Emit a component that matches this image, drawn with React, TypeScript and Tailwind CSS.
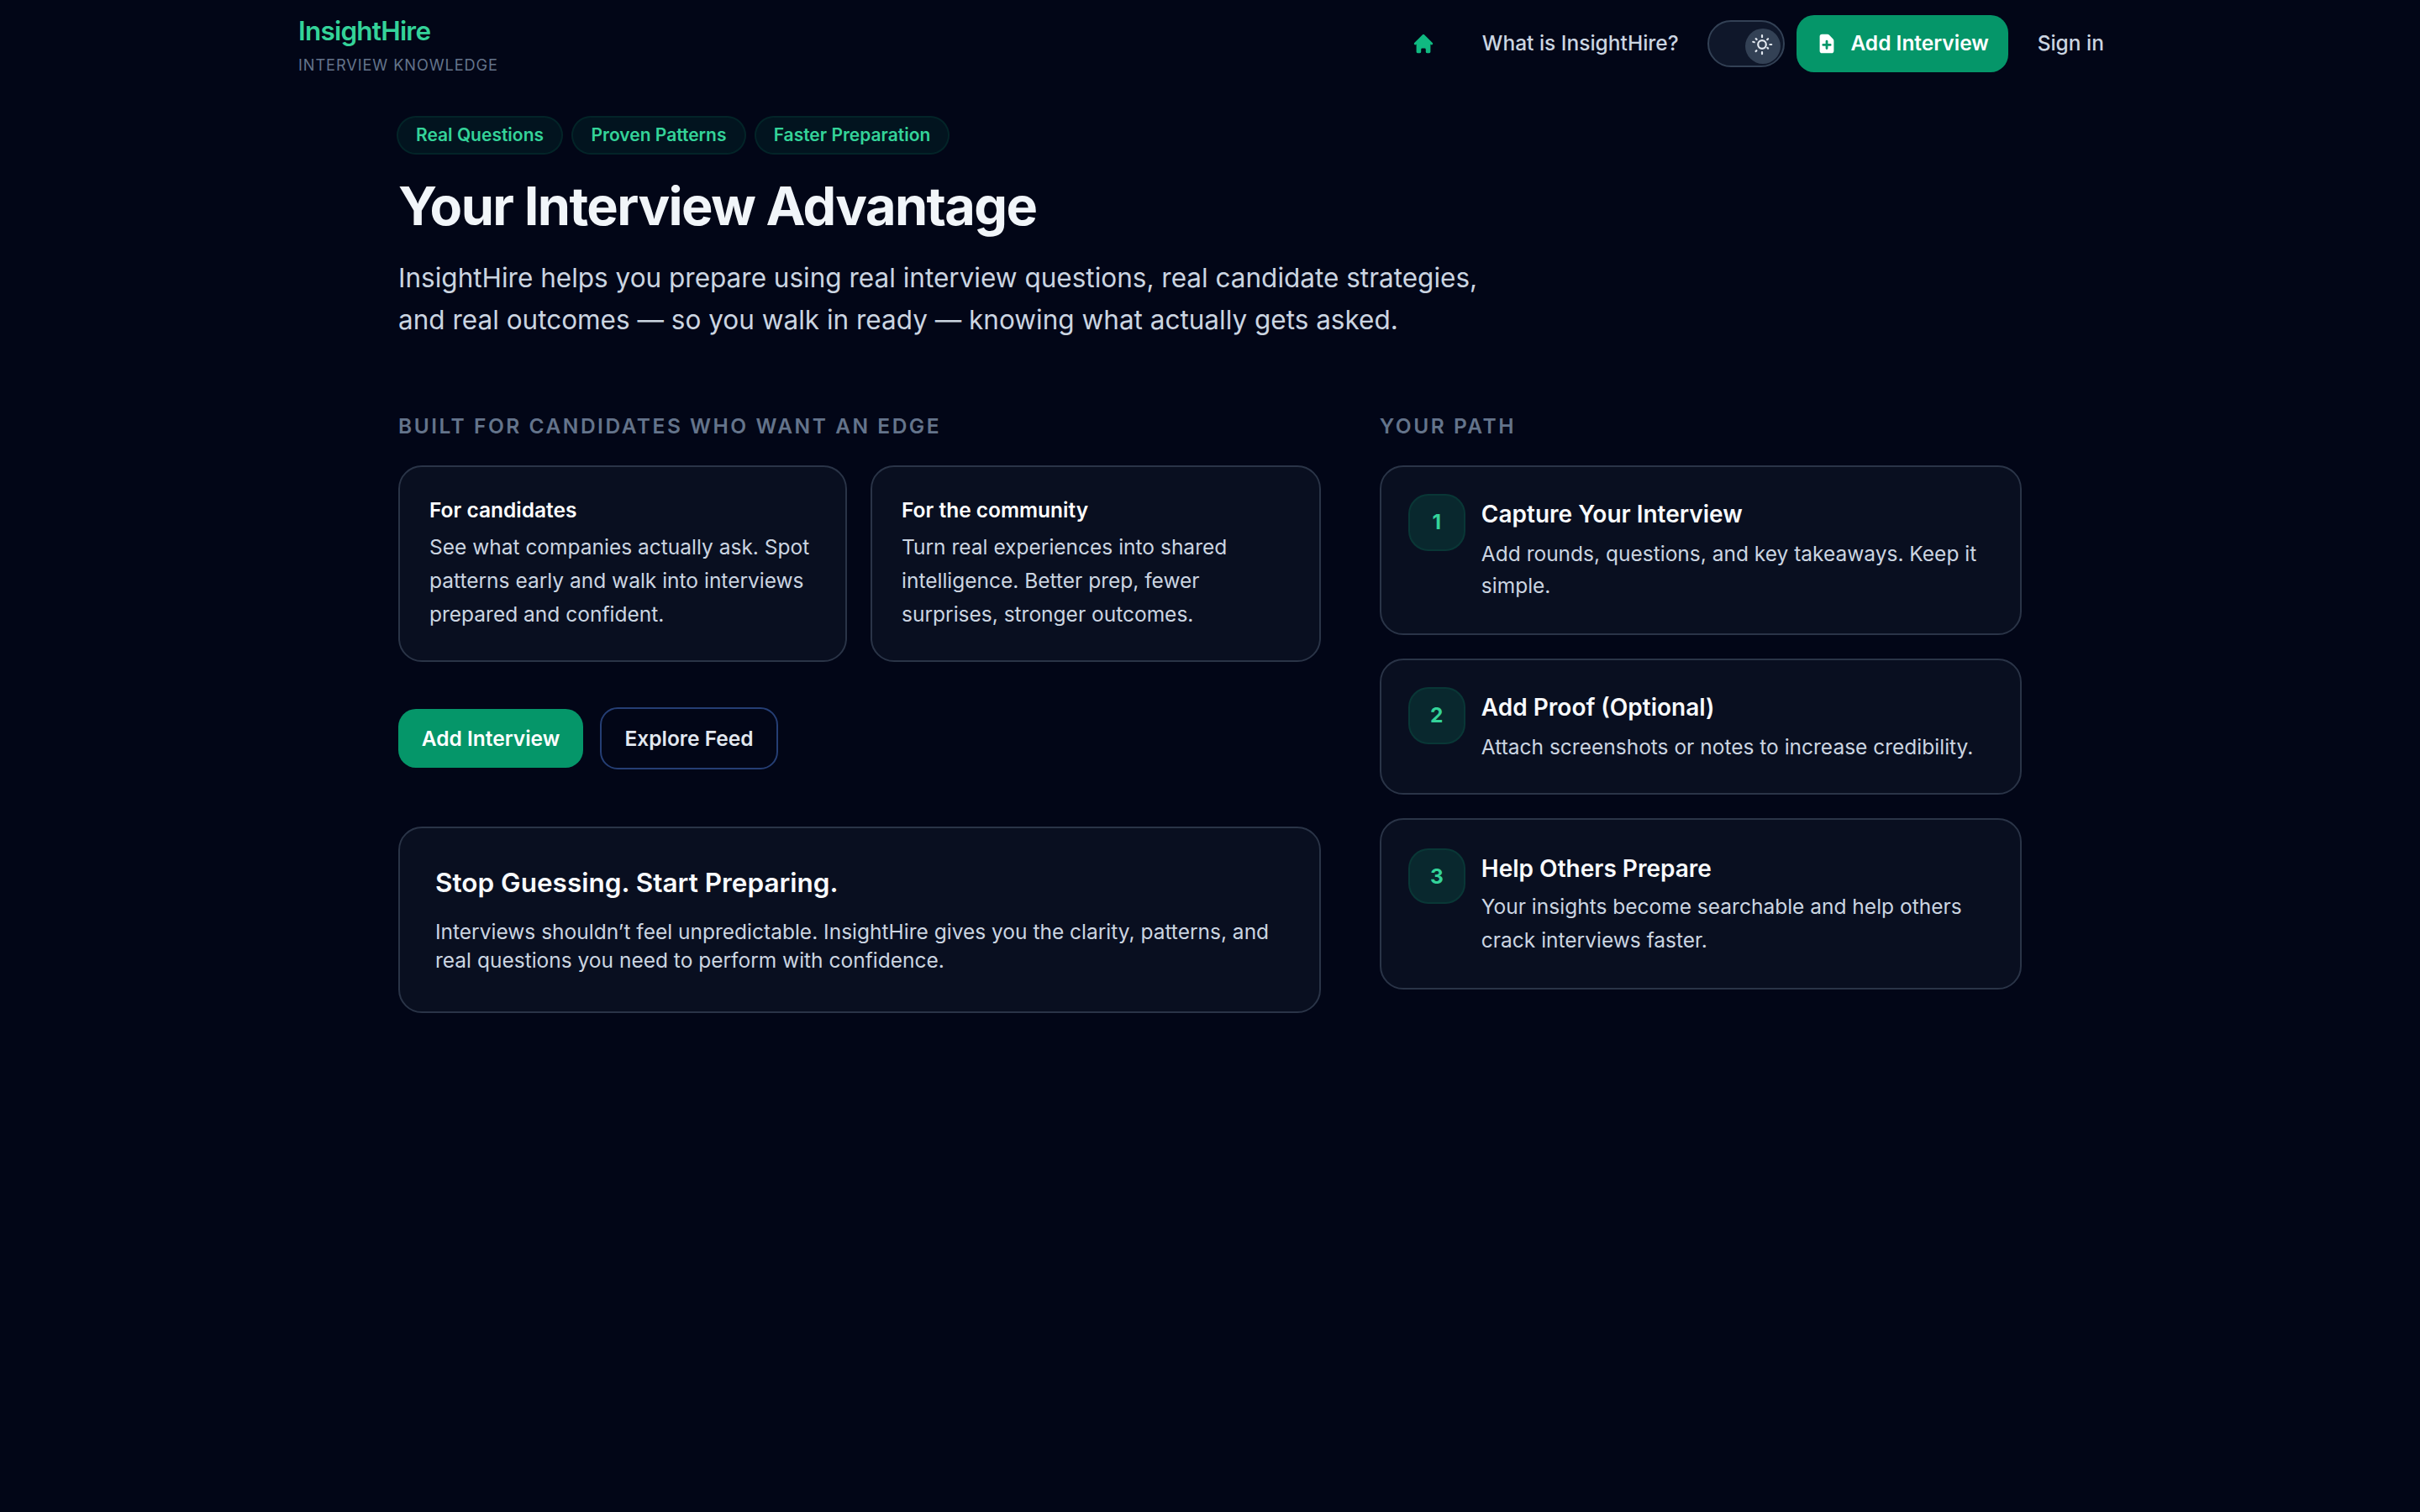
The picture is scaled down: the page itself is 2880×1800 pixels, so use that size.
import { HiDocumentAdd, HiHome } from "react-icons/hi";

const tags = [
  { label: "Real Questions", width: "w-[198px]" },
  { label: "Proven Patterns", width: "w-[208px]" },
  { label: "Faster Preparation", width: "w-[232px]" },
];

const audiences = [
  {
    title: "For candidates",
    text: "See what companies actually ask. Spot patterns early and walk into interviews prepared and confident.",
  },
  {
    title: "For the community",
    text: "Turn real experiences into shared intelligence. Better prep, fewer surprises, stronger outcomes.",
  },
];

const steps = [
  {
    title: "Capture Your Interview",
    text: "Add rounds, questions, and key takeaways. Keep it simple.",
    card: "h-[202px] pt-[32px]",
    badge: "h-[68px] pb-[2px]",
    body: "mt-[10px] leading-[38px]",
  },
  {
    title: "Add Proof (Optional)",
    text: "Attach screenshots or notes to increase credibility.",
    card: "h-[162px] pt-[32px]",
    badge: "h-[68px] pb-[2px]",
    body: "mt-[10px] leading-[38px]",
  },
  {
    title: "Help Others Prepare",
    text: "Your insights become searchable and help others crack interviews faster.",
    card: "h-[204px] pt-[34px]",
    badge: "h-[66px]",
    body: "mt-[7px] leading-[40px]",
  },
];

function SunIcon() {
  return (
    <svg
      viewBox="-14 -14 28 28"
      className="absolute left-[6px] top-[5px] size-[28px] text-slate-200"
      fill="none"
      stroke="currentColor"
      strokeWidth="2.2"
      strokeLinecap="round"
    >
      <circle r="4.8" />
      <path d="M0 -11v2.2M6.2 -5.9l.9 -.9M9.4 0h1.8M6.3 3.8l.8 .8M0 9.2v2M-6.6 7.2l-.8 .9M-9.2 -2.8l-1.6 -.4M-6.4 -6l-.9 -.9" />
    </svg>
  );
}

function ThemeToggle() {
  return (
    <button className="relative h-[56px] w-[92px] rounded-full border-2 border-[#334155] bg-[#0f172a]">
      <span className="absolute left-[43px] top-[8px] size-[42px] rounded-full bg-[#334155]">
        <SunIcon />
      </span>
    </button>
  );
}

function Header() {
  return (
    <header className="mx-auto flex h-[104px] w-[2240px] items-center justify-between pl-[35px] pr-[56px]">
      <div className="pt-[2px]">
        <div className="text-[31.5px] font-semibold leading-[43px] tracking-[-0.025em] text-[#34d399]">InsightHire</div>
        <div className="mt-[5px] text-[18.2px] leading-[28px] tracking-[0.05em] text-[#64748b]">INTERVIEW KNOWLEDGE</div>
      </div>
      <nav className="flex items-center text-[24.5px] font-medium text-[#cbd5e1]">
        <HiHome className="size-[28px] text-[#10b981]" />
        <a className="ml-[56px] pb-[2px]">What is InsightHire?</a>
        <div className="ml-[34px] flex items-center gap-[14px]">
          <ThemeToggle />
          <button className="flex h-[68px] w-[252px] items-center justify-center gap-[14px] rounded-[21px] bg-[#059669] font-semibold text-white">
            <HiDocumentAdd className="size-[28px]" />
            <span className="pb-[2px]">Add Interview</span>
          </button>
        </div>
        <a className="ml-[35px] pb-[2px]">Sign in</a>
      </nav>
    </header>
  );
}

function SectionLabel({ children }: { children: string }) {
  return (
    <h2 className="text-[24.5px] font-semibold leading-[34px] tracking-[2.52px] text-[#64748b]">{children}</h2>
  );
}

export default function App() {
  return (
    <div className="min-h-[1800px] bg-[#020617] font-['Inter',sans-serif] text-[24.5px] text-[#cbd5e1]">
      <Header />
      <main className="mx-auto w-[1932px] pt-[34px]">
        <div className="-ml-[2px] flex gap-[10px]">
          {tags.map((t) => (
            <span
              key={t.label}
              className={`flex h-[46px] items-center justify-center rounded-full border-2 border-[#10b981]/10 bg-[#10b981]/8 pb-[1px] text-[21px] font-semibold text-[#34d399] ${t.width}`}
            >
              {t.label}
            </span>
          ))}
        </div>
        <h1 className="mt-[25px] text-[63px] font-bold leading-[72px] tracking-[-0.025em] text-[#f1f5f9]">
          Your Interview Advantage
        </h1>
        <p className="mt-[25px] w-[1344px] text-[31.5px] leading-[50px]">
          InsightHire helps you prepare using real interview questions, real candidate strategies, and real outcomes —
          so you walk in ready — knowing what actually gets asked.
        </p>

        <div className="mt-[84px] grid grid-cols-12 gap-x-[70px]">
          <section className="col-span-7">
            <SectionLabel>BUILT FOR CANDIDATES WHO WANT AN EDGE</SectionLabel>
            <div className="mt-[30px] grid grid-cols-[534px_1fr] gap-[28px]">
              {audiences.map((a) => (
                <div
                  key={a.title}
                  className="h-[234px] rounded-[28px] border-2 border-[#2a3447] bg-[#090f20] px-[35px] pt-[34px]"
                >
                  <h3 className="font-semibold leading-[35px] text-white">{a.title}</h3>
                  <p className="mt-[6px] leading-[40px]">{a.text}</p>
                </div>
              ))}
            </div>
            <div className="mt-[54px] flex items-center gap-[20px] font-semibold">
              <button className="h-[70px] w-[220px] rounded-[21px] bg-[#059669] text-white">Add Interview</button>
              <button className="h-[74px] w-[212px] rounded-[21px] border-2 border-[#253e74] text-[#e2e8f0]">
                Explore Feed
              </button>
            </div>
            <div className="mt-[68px] h-[222px] rounded-[28px] border-2 border-[#2a3447] bg-[#090f20] px-[42px] pt-[42px]">
              <h3 className="text-[31.5px] font-semibold leading-[45px] text-[#f8fafc]">
                Stop Guessing. Start Preparing.
              </h3>
              <p className="mt-[19px] leading-[34px]">
                Interviews shouldn’t feel unpredictable. InsightHire gives you the clarity, patterns, and real questions
                you need to perform with confidence.
              </p>
            </div>
          </section>

          <section className="col-span-5">
            <SectionLabel>YOUR PATH</SectionLabel>
            <ol className="mt-[30px] flex flex-col gap-[28px]">
              {steps.map((s, i) => (
                <li
                  key={s.title}
                  className={`flex items-start gap-[19px] rounded-[28px] border-2 border-[#2a3447] bg-[#090f20] px-[32px] ${s.card}`}
                >
                  <span
                    className={`flex w-[68px] shrink-0 items-center justify-center rounded-[24px] border-2 border-[#10b981]/10 bg-[#10b981]/15 font-bold text-[#34d399] ${s.badge}`}
                  >
                    {i + 1}
                  </span>
                  <div className="pt-[6px]">
                    <h3 className="text-[28px] font-semibold leading-[36px] text-[#f8fafc]">{s.title}</h3>
                    <p className={s.body}>{s.text}</p>
                  </div>
                </li>
              ))}
            </ol>
          </section>
        </div>
      </main>
    </div>
  );
}
